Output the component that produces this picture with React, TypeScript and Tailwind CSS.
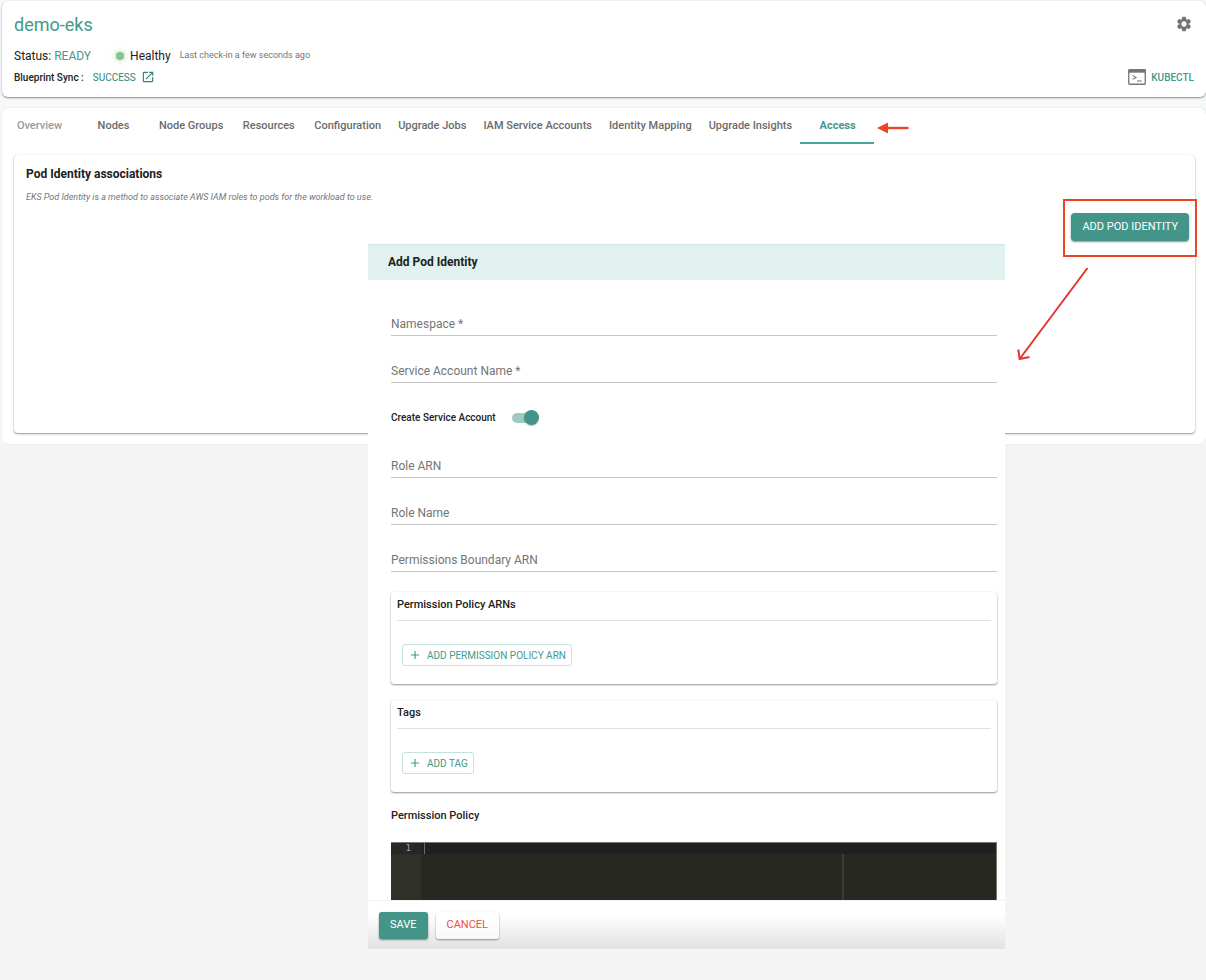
import { useState } from "react";
import type { ReactNode } from "react";
import { MdSettings, MdOpenInNew, MdAdd } from "react-icons/md";

const tabs = [
  "Overview",
  "Nodes",
  "Node Groups",
  "Resources",
  "Configuration",
  "Upgrade Jobs",
  "IAM Service Accounts",
  "Identity Mapping",
  "Upgrade Insights",
  "Access",
];

const cardShadow = "shadow-[0_1px_2px_rgba(0,0,0,0.42),0_0_1px_rgba(0,0,0,0.12)]";

function TerminalIcon() {
  return (
    <svg width="18" height="16" viewBox="0 0 18 16" fill="none" aria-hidden="true">
      <rect x="0.75" y="0.75" width="16.5" height="14.5" rx="0.8" stroke="#757575" strokeWidth="1.3" />
      <rect x="0.5" y="0.5" width="17" height="3.2" fill="#757575" />
      <path d="M4.6 6.4 L8 8.4 L4.6 10.4" stroke="#757575" strokeWidth="1.1" />
      <path d="M9 12 H13.6" stroke="#757575" strokeWidth="1.1" />
    </svg>
  );
}

function ClusterHeader() {
  return (
    <header className={`flex justify-between rounded-md bg-white px-3 pt-3 pb-[11px] ${cardShadow}`}>
      <div>
        <h1 className="text-[18px] leading-6 text-[#43998b]">demo-eks</h1>
        <div className="mt-[7px] flex h-6 items-center text-[12px]">
          <span>
            Status: <span className="text-[#43998b]">READY</span>
          </span>
          <span className="ml-[25px] size-2 rounded-full bg-[#8bc48a] shadow-[0_0_5px_2px_rgba(139,196,138,0.35)]" />
          <span className="ml-[6px]">Healthy</span>
          <span className="ml-[9px] text-[9px] text-[#757575]">Last check-in a few seconds ago</span>
        </div>
        <div className="flex h-[18px] items-center text-[10px]">
          <span className="font-medium">Blueprint Sync :</span>
          <a href="#sync" className="ml-[9px] flex items-center gap-[5px] text-[#2f8577]">
            SUCCESS
            <MdOpenInNew className="size-[14px]" aria-label="Open sync details" />
          </a>
        </div>
      </div>
      <div className="flex flex-col items-end justify-between">
        <button type="button" aria-label="Settings" className="mr-[1px] flex h-[22px] items-center text-[#757575]">
          <MdSettings className="size-[18px]" />
        </button>
        <button type="button" className="flex h-[18px] items-center gap-[5px] text-[10px] font-medium text-[#43998b]">
          <TerminalIcon />
          KUBECTL
        </button>
      </div>
    </header>
  );
}

function TabBar() {
  return (
    <nav className="flex h-9 items-stretch">
      {tabs.map((tab) => {
        const active = tab === "Access";
        const first = tab === "Overview";
        const tone = active
          ? "border-[#43a698] font-bold text-[#43998b]"
          : first
            ? "border-transparent font-medium text-[#999999]"
            : "border-transparent font-medium text-[#6b6b6b]";
        return (
          <button
            key={tab}
            type="button"
            className={`min-w-[74px] border-b-2 pt-[2px] pr-2 pl-[9px] text-[11px] whitespace-nowrap ${tone}`}
          >
            {tab}
          </button>
        );
      })}
      <svg width="32" height="12" viewBox="0 0 32 12" className="mt-[14px] ml-[3px]" aria-hidden="true">
        <path d="M0 6 L11 0.5 V11.5 Z" fill="#ec4427" />
        <path d="M10 6 H31.5" stroke="#ec4427" strokeWidth="2.4" />
      </svg>
    </nav>
  );
}

function Associations() {
  return (
    <section className={`mt-[11px] mr-[11px] mb-[11px] ml-3 h-[278px] rounded-sm bg-white px-3 pt-[10px] ${cardShadow}`}>
      <h2 className="text-[12px] leading-[18px] font-bold">Pod Identity associations</h2>
      <p className="mt-[6px] text-[9px] leading-4 text-[#6f7680] italic">
        EKS Pod Identity is a method to associate AWS IAM roles to pods for the workload to use.
      </p>
      <div className="-mr-[6px] mt-2 flex justify-end">
        <div className="relative">
          <button
            type="button"
            className="h-7 rounded-sm bg-[#43958a] px-[11px] text-[11px] whitespace-nowrap text-white shadow-[0_1px_2px_rgba(0,0,0,0.45)]"
          >
            ADD POD IDENTITY
          </button>
          <div className="pointer-events-none absolute -top-[14px] -right-2 -bottom-4 -left-2 border-2 border-[#ec4427]" />
          <svg
            width="74"
            height="96"
            viewBox="0 0 74 96"
            fill="none"
            className="absolute top-[53px] right-[99px]"
            aria-hidden="true"
          >
            <path d="M71.5 2 L4 92.5 M2.3 83.5 L3.6 93 L13.5 91" stroke="#e5362c" strokeWidth="2" />
          </svg>
        </div>
      </div>
    </section>
  );
}

function Field({ id, label }: { id: string; label: string }) {
  return (
    <div className="relative h-[47px]">
      <input
        id={id}
        className="absolute inset-x-0 bottom-0 h-6 w-full border-b border-[#c6c6c6] bg-transparent text-[12px] outline-none"
      />
      <label htmlFor={id} className="pointer-events-none absolute bottom-1 left-0 text-[12px] leading-4 text-[#757575]">
        {label}
      </label>
    </div>
  );
}

function Panel({ title, action }: { title: string; action: string }) {
  return (
    <section className={`h-[92px] rounded-[3px] bg-white px-[6px] pt-[5px] ${cardShadow}`}>
      <h3 className="border-b border-[#e2e2e2] pb-[7px] text-[11px] leading-4 font-medium">{title}</h3>
      <button
        type="button"
        className="mt-[23px] ml-[5px] flex h-[22px] items-center gap-[5px] rounded-[3px] border border-[#c5e2dd] px-[5px] text-[10px] text-[#43998b]"
      >
        <MdAdd className="size-[14px]" />
        {action}
      </button>
    </section>
  );
}

function Footer({ children }: { children: ReactNode }) {
  return (
    <div className="relative flex h-[49px] gap-2 border-t border-[#f2f2f2] bg-linear-to-b from-white from-30% to-[#e2e2e2] px-[11px] pt-[11px]">
      {children}
    </div>
  );
}

function PodIdentityDialog() {
  const [create, setCreate] = useState(true);
  return (
    <form
      aria-labelledby="dialog-title"
      className="absolute top-[244px] right-[201px] left-[368px] bg-white"
    >
      <h2
        id="dialog-title"
        className="h-9 border-t border-[#d9e4e3] bg-[#e1f1ef] px-5 text-[12px] leading-[34px] font-bold"
      >
        Add Pod Identity
      </h2>
      <div className="pt-[9px] pr-2 pl-[23px]">
        <Field id="namespace" label="Namespace *" />
        <Field id="service-account" label="Service Account Name *" />
        <label className="flex h-12 items-center gap-4 pt-[21px] text-[10px] font-medium">
          Create Service Account
          <span className="relative flex h-4 w-[27px] items-center">
            <input
              type="checkbox"
              role="switch"
              checked={create}
              onChange={(event) => setCreate(event.target.checked)}
              className="peer h-[10px] w-6 appearance-none rounded-full bg-[#bdbdbd] checked:bg-[#9fc9c2]"
            />
            <span className="pointer-events-none absolute left-0 size-[15px] rounded-full bg-white shadow-[0_1px_1px_rgba(0,0,0,0.25)] peer-checked:right-0 peer-checked:left-auto peer-checked:bg-[#43958a]" />
          </span>
        </label>
        <Field id="role-arn" label="Role ARN" />
        <Field id="role-name" label="Role Name" />
        <Field id="boundary-arn" label="Permissions Boundary ARN" />
        <div className="mt-5 flex flex-col gap-4">
          <Panel title="Permission Policy ARNs" action="ADD PERMISSION POLICY ARN" />
          <Panel title="Tags" action="ADD TAG" />
        </div>
        <label htmlFor="policy" className="mt-4 block text-[11px] leading-4 font-medium">
          Permission Policy
        </label>
        <div className="mt-[18px] flex h-[58px] border-t border-r border-[#77776f] bg-[#272822]">
          <div className="w-[30px] bg-[#2f3129]">
            <div className="bg-[#272727] pr-[10px] text-right font-['DejaVu_Sans_Mono',monospace] text-[9px] leading-[11px] text-[#a0a09a]">
              1
            </div>
          </div>
          <div className="relative grow">
            <div className="h-[11px] bg-[#202020] pl-[3px]">
              <div className="h-full w-px bg-[#6a6a66]" />
            </div>
            <div className="absolute top-[11px] bottom-0 left-[421px] w-[2px] bg-[#3b3c36]" />
            <textarea
              id="policy"
              className="absolute inset-0 size-full resize-none bg-transparent pl-1 text-[9px] leading-[11px] text-white outline-none"
            />
          </div>
        </div>
      </div>
      <Footer>
        <button
          type="button"
          className="h-[27px] rounded-[3px] bg-[#43958a] px-[11px] text-[11px] text-white shadow-[0_1px_2px_rgba(0,0,0,0.45)]"
        >
          SAVE
        </button>
        <button
          type="button"
          className="h-[27px] rounded-[3px] bg-white/70 px-[11px] text-[11px] text-[#e8503f] shadow-[0_1px_2px_rgba(0,0,0,0.4)]"
        >
          CANCEL
        </button>
      </Footer>
    </form>
  );
}

export default function App() {
  return (
    <div className="relative min-h-screen bg-[#f4f4f4] font-['Roboto',sans-serif] text-[#212121]">
      <main className="flex flex-col gap-[11px] bg-[#f7f8fa] pt-px pl-[2px]">
        <ClusterHeader />
        <div className="rounded-md bg-white shadow-[0_0_1px_rgba(0,0,0,0.25)]">
          <TabBar />
          <Associations />
        </div>
      </main>
      <PodIdentityDialog />
    </div>
  );
}
